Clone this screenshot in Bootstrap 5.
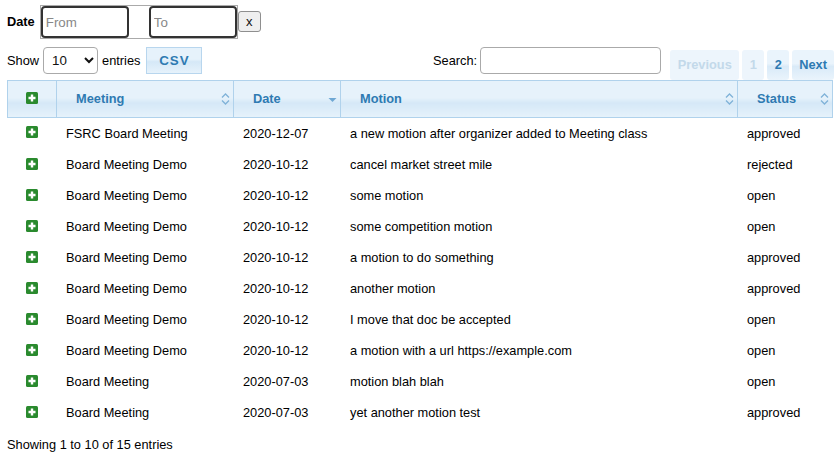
<!DOCTYPE html>
<html lang="en">
<head>
  <meta charset="UTF-8">
  <meta name="viewport" content="width=device-width, initial-scale=1.0">
  <title>Motions</title>
  <link href="https://cdn.jsdelivr.net/npm/bootstrap@5.3.2/dist/css/bootstrap.min.css" rel="stylesheet">
  <style>
    body { font-family: "Liberation Sans", Arial, sans-serif; font-size: 12.8px; color: #000; background: #fff; overflow: hidden; }
    .page-wrap { padding: 5px 7px 0 7px; }
    .date-row { height: 33px; }
    .date-label { font-weight: 700; margin-right: 5px; margin-top: 7px; }
    .date-box { border: 1px solid #aaa; width: 198px; height: 34px; display: flex; justify-content: space-between; }
    .date-box input { width: 88px; height: 32px; border: 2px solid #333; border-radius: 4px; padding: 0 3px; font-size: 13.33px; font-family: inherit; outline: 0; }
    .date-box input::placeholder { color: #888; opacity: 1; }
    .clear-btn { font-size: 13px; line-height: 1; height: 21px; width: 23px; padding: 0; margin-left: 0; border: 1px solid #8f8f8f; border-radius: 3px; background: #efefef; color: #111; margin-top: 6px; }
    .tools-row { height: 33px; margin-top: 9px; }
    .len-select { width: 55px; height: 27px; margin: 0 4px; padding: 0 0 0 4px; font-size: 13.33px; font-family: inherit; border: 1px solid #aaa; border-radius: 4px; background: #fff; color: #111; }
    .csv-btn { border: 1px solid #b8d6ee; background: linear-gradient(#e6f2fb 0%, #e6f2fb 45%, #d5e8f7 55%, #e6f2fb 100%); color: #2e7ab2; font-weight: 700; height: 27px; width: 56px; padding: 0; font-size: 13.33px; letter-spacing: 1px; margin-left: 6px; }
    .search-box { width: 181px; height: 27px; margin-left: 3px; border: 1px solid #aaa; border-radius: 4px; }
    .pager { margin-left: 9px; margin-right: -2px; margin-top: 3px; gap: 3px; }
    .pager span { height: 30px; line-height: 30px; padding: 0 7px; border-radius: 3px; font-weight: 700; color: #2e7ab2; background: linear-gradient(#eaf4fc 0%, #eaf4fc 45%, #d9eaf8 55%, #eaf4fc 100%); }
    .pager span.is-off { color: #c3d9ea; background: #edf5fc; }
    .pager span.pg-num { width: 22px; padding: 0; text-align: center; }
    .pager span.pg-prev { padding: 0 7.5px; }
    table.motion-table { width: 825px; table-layout: fixed; margin: 0; border-collapse: collapse; }
    .motion-table th { height: 37px; padding: 0 9px 1px 19px; border: 1px solid #b0d2ec; color: #2e7ab2; font-weight: 700; position: relative; vertical-align: middle; background: linear-gradient(#e6f2fb 0%, #e6f2fb 45%, #d5e8f7 60%, #e6f2fb 100%); }
    .motion-table td { height: 31px; padding: 0 9px 0 9.5px; border: 0; color: #000; vertical-align: middle; }
    .motion-table tbody tr:first-child td { height: 32px; }
    .motion-table .icon-col { text-align: center; padding: 0; }
    .plus-icon { display: block; margin: 0 auto 3px; width: 12px; height: 12px; }
    .sort-icon { position: absolute; right: 3px; top: 50%; margin-top: -6px; width: 9px; height: 12px; }
    .info-row { margin-top: 6px; }
  </style>
</head>
<body>
  <div class="page-wrap">
    <div class="date-row d-flex align-items-start">
      <span class="date-label">Date</span>
      <div class="date-box">
        <input type="text" placeholder="From">
        <input type="text" placeholder="To">
      </div>
      <button class="clear-btn" type="button">x</button>
    </div>

    <div class="tools-row d-flex align-items-start">
      <div class="d-flex align-items-center">
        <span>Show</span>
        <select class="len-select"><option>10</option><option>25</option><option>50</option></select>
        <span>entries</span>
        <button class="csv-btn" type="button">CSV</button>
      </div>
      <div class="d-flex align-items-center ms-auto">
        <span>Search:</span>
        <input class="search-box" type="text">
      </div>
      <div class="pager d-flex">
        <span class="is-off pg-prev">Previous</span>
        <span class="is-off pg-num">1</span>
        <span class="pg-num">2</span>
        <span>Next</span>
      </div>
    </div>

    <table class="motion-table">
      <colgroup>
        <col style="width:49px"><col style="width:177px"><col style="width:107px"><col style="width:397px"><col style="width:95px">
      </colgroup>
      <thead>
        <tr id="headRow"></tr>
      </thead>
      <tbody id="rows"></tbody>
    </table>

    <div class="info-row">Showing 1 to 10 of 15 entries</div>
  </div>

  <script src="https://cdn.jsdelivr.net/npm/bootstrap@5.3.2/dist/js/bootstrap.bundle.min.js"></script>
  <script>
    const plus = `<svg class="plus-icon" viewBox="0 0 12 12"><rect width="12" height="12" rx="1.5" fill="#2a8a2e"/><path d="M6 2.5v7M2.5 6h7" stroke="#fff" stroke-width="2.4"/></svg>`;
    const both = `<svg class="sort-icon" viewBox="0 0 9 12"><path d="M1 4.5 4.5 1 8 4.5M1 7.5 4.5 11 8 7.5" fill="none" stroke="#7fb2d8" stroke-width="1.3"/></svg>`;
    const desc = `<svg class="sort-icon" viewBox="0 0 9 12"><path d="M.5 5h8L4.5 9z" fill="#6fa8d4"/></svg>`;

    document.getElementById('headRow').innerHTML =
      `<th class="icon-col">${plus}</th>` +
      `<th>Meeting${both}</th>` +
      `<th>Date${desc}</th>` +
      `<th>Motion${both}</th>` +
      `<th>Status${both}</th>`;

    const data = [
      ['FSRC Board Meeting', '2020-12-07', 'a new motion after organizer added to Meeting class', 'approved'],
      ['Board Meeting Demo', '2020-10-12', 'cancel market street mile', 'rejected'],
      ['Board Meeting Demo', '2020-10-12', 'some motion', 'open'],
      ['Board Meeting Demo', '2020-10-12', 'some competition motion', 'open'],
      ['Board Meeting Demo', '2020-10-12', 'a motion to do something', 'approved'],
      ['Board Meeting Demo', '2020-10-12', 'another motion', 'approved'],
      ['Board Meeting Demo', '2020-10-12', 'I move that doc be accepted', 'open'],
      ['Board Meeting Demo', '2020-10-12', 'a motion with a url https://example.com', 'open'],
      ['Board Meeting', '2020-07-03', 'motion blah blah', 'open'],
      ['Board Meeting', '2020-07-03', 'yet another motion test', 'approved'],
    ];
    document.getElementById('rows').innerHTML = data.map(r =>
      `<tr><td class="icon-col">${plus}</td>${r.map(c => `<td>${c}</td>`).join('')}</tr>`
    ).join('');
  </script>
</body>
</html>
